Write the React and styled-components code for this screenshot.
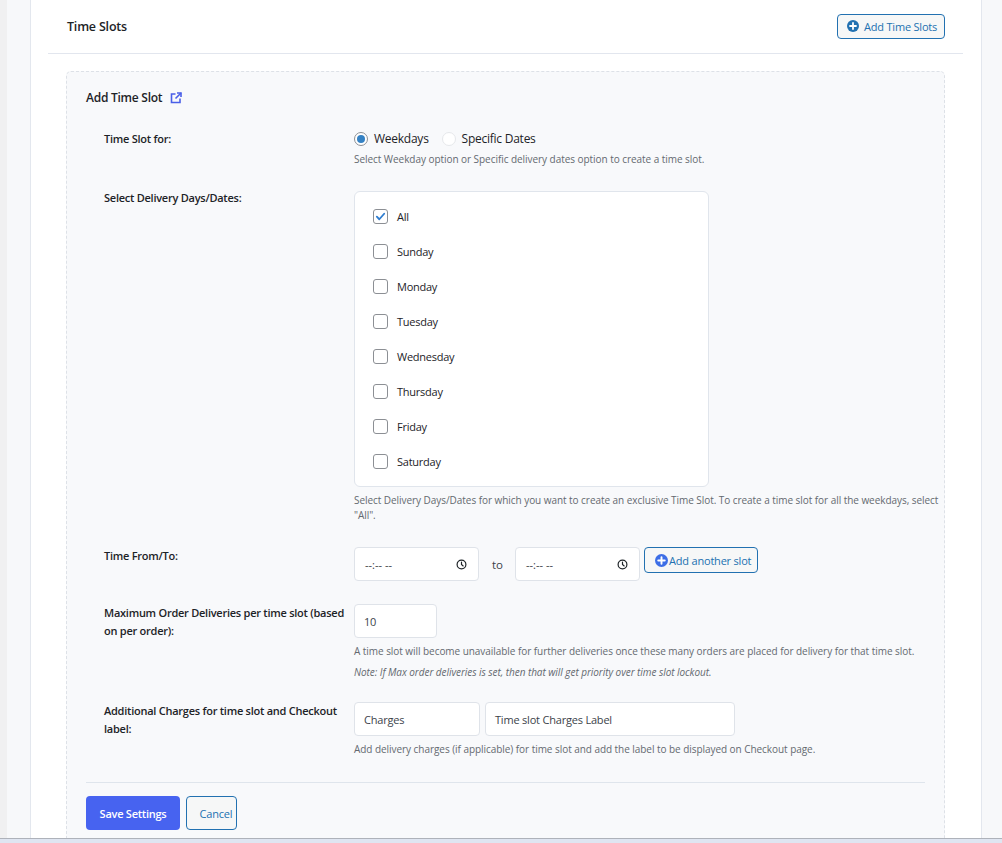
import React from "react";
import styled, { createGlobalStyle } from "styled-components";

const Global = createGlobalStyle`
  html, body { margin: 0; padding: 0; height: 100%; }
  body {
    font-family: "Open Sans", "Noto Sans", "Liberation Sans", sans-serif;
    color: #1d2327;
    background: #f0f0f1;
  }
  #root { height: 100%; }
  * { box-sizing: border-box; }
`;

const Page = styled.div`
  height: 100vh;
  display: flex;
  flex-direction: column;
  overflow: hidden;
`;

const Viewport = styled.div`
  flex: 1;
  min-height: 0;
  display: flex;
  padding-left: 7px;
  overflow: hidden;
`;

const Canvas = styled.div`
  flex: 1;
  display: flex;
  background: #f7f8fa;
  padding: 0 20px 0 23px;
`;

const Card = styled.main`
  width: 952px;
  background: #fff;
  border-left: 1px solid #e3e7ee;
  border-right: 1px solid #e3e7ee;
  padding: 0 18px 0 17px;
  display: flex;
  flex-direction: column;
`;

const Header = styled.header`
  height: 54px;
  flex-shrink: 0;
  display: flex;
  align-items: center;
  justify-content: space-between;
  padding: 0 18px 1px 19px;
  border-bottom: 1px solid #e2e6ee;
`;

const Title = styled.h2`
  margin: 0;
  font-size: 12.5px;
  font-weight: 600;
  color: #1d2327;
  letter-spacing: -0.2px;
`;

const OutlineButton = styled.button`
  display: inline-flex;
  align-items: center;
  gap: ${(p) => p.$gap || 5}px;
  height: ${(p) => p.$h}px;
  width: ${(p) => p.$w}px;
  padding: 0 0 0 ${(p) => p.$pl || 9}px;
  justify-content: ${(p) => (p.$center ? "center" : "flex-start")};
  border: 1px solid #2271b1;
  border-radius: 4px;
  background: #f6f7f7;
  color: #2271b1;
  font-family: inherit;
  font-size: 11px;
  letter-spacing: -0.2px;
  cursor: pointer;
  margin-left: ${(p) => p.$ml || 0}px;
  align-self: ${(p) => (p.$top ? "flex-start" : "auto")};
  svg { flex-shrink: 0; }
`;

const Panel = styled.section`
  margin: 17px 18px 0 18px;
  flex: 1;
  background: #f8f9fb;
  border: 1px dashed #dde1e7;
  border-bottom: none;
  border-radius: 5px 5px 0 0;
  padding: 0 19px;
`;

const PanelHeading = styled.h3`
  margin: 17px 0 0;
  display: flex;
  align-items: center;
  gap: 8px;
  font-size: 12px;
  line-height: 18px;
  font-weight: 600;
  color: #1d2327;
  letter-spacing: -0.25px;
`;

const Rows = styled.div`
  padding-left: 18px;
`;

const Row = styled.div`
  display: grid;
  grid-template-columns: 250px 590px;
  align-items: start;
  margin-top: ${(p) => p.$mt}px;
`;

const Label = styled.div`
  font-size: 11px;
  line-height: 18px;
  font-weight: 600;
  color: #1d2327;
  padding-right: 6px;
  letter-spacing: -0.25px;
`;

const Field = styled.div`
  display: flex;
  flex-direction: column;
`;

const Inline = styled.div`
  display: flex;
  align-items: center;
  gap: ${(p) => p.$gap || 0}px;
`;

const Desc = styled.p`
  margin: ${(p) => p.$mt || 5}px 0 0;
  font-size: 10px;
  line-height: ${(p) => p.$lh || 16}px;
  color: #646970;
  font-style: ${(p) => (p.$italic ? "italic" : "normal")};
  letter-spacing: -0.05px;
`;

const RadioOption = styled.label`
  display: inline-flex;
  align-items: center;
  gap: 6px;
  margin-right: 13px;
  font-size: 12px;
  line-height: 18px;
  color: #1d2327;
  letter-spacing: -0.25px;
`;

const RadioDot = styled.span`
  width: 14px;
  height: 14px;
  border-radius: 50%;
  border: 1px solid ${(p) => (p.$on ? "#8c8f94" : "#e6e8eb")};
  background: #fff;
  display: inline-flex;
  align-items: center;
  justify-content: center;
  &::after {
    content: "";
    width: 8px;
    height: 8px;
    border-radius: 50%;
    background: ${(p) => (p.$on ? "#3582c4" : "transparent")};
  }
`;

const DaysBox = styled.div`
  width: 355px;
  background: #fff;
  border: 1px solid #e0e5ec;
  border-radius: 6px;
  padding: 7px 18px;
  margin-top: 2px;
`;

const DayItem = styled.label`
  height: 35px;
  display: flex;
  align-items: center;
  gap: 9px;
  font-size: 11px;
  color: #1d2327;
  letter-spacing: -0.25px;
`;

const CheckBox = styled.span`
  width: 15px;
  height: 15px;
  border: 1px solid #8c8f94;
  border-radius: 3px;
  background: #fff;
  display: inline-flex;
  align-items: center;
  justify-content: center;
`;

const TimeInput = styled.div`
  width: 125px;
  height: 34px;
  background: #fff;
  border: 1px solid #dfe3e9;
  border-radius: 4px;
  display: flex;
  align-items: center;
  justify-content: space-between;
  padding: 0 11px 0 10px;
  font-size: 11px;
  color: #3c434a;
`;

const ToText = styled.span`
  font-size: 11.5px;
  color: #3c434a;
  margin: 0 12px 0 13px;
`;

const TextBox = styled.div`
  width: ${(p) => p.$w}px;
  height: 34px;
  background: #fff;
  border: 1px solid #dfe3e9;
  border-radius: 4px;
  display: flex;
  align-items: center;
  padding: 0 9px;
  font-size: 11px;
  color: #3c434a;
  letter-spacing: -0.2px;
`;

const Divider = styled.hr`
  margin: 25px 0 0;
  border: none;
  border-top: 1px solid #dfe5ec;
`;

const Actions = styled.div`
  display: flex;
  gap: 6px;
  margin-top: 13px;
`;

const PrimaryButton = styled.button`
  width: 94px;
  height: 34px;
  border: none;
  border-radius: 4px;
  background: #4763f0;
  color: #fff;
  font-family: inherit;
  font-size: 11px;
  font-weight: 600;
  letter-spacing: -0.25px;
  cursor: pointer;
`;

const BottomStrip = styled.div`
  height: 5px;
  flex-shrink: 0;
  background: #dfe5f1;
  border-top: 1px solid #aeb2ba;
`;

const PlusCircle = ({ color, size = 12 }) => (
  <svg width={size} height={size} viewBox="0 0 12 12">
    <circle cx="6" cy="6" r="6" fill={color} />
    <path d="M6 3v6M3 6h6" stroke="#fff" strokeWidth="1.8" strokeLinecap="round" />
  </svg>
);

const ExternalIcon = () => (
  <svg width="12" height="12" viewBox="0 0 12 12" fill="none" stroke="#4a5fe8" strokeWidth="1.6">
    <path d="M5.5 2H1.5v8.5H10V6.5" />
    <path d="M7 1h4v4" />
    <path d="M11 1L5.5 6.5" />
  </svg>
);

const ClockIcon = () => (
  <svg width="11" height="11" viewBox="0 0 12 12" fill="none" stroke="#1d2327" strokeWidth="1.3">
    <circle cx="6" cy="6" r="4.8" />
    <path d="M6 3.3V6l1.8 1.6" strokeLinecap="round" />
  </svg>
);

const CheckMark = () => (
  <svg width="11" height="11" viewBox="0 0 12 12" fill="none" stroke="#2f7dd0" strokeWidth="2">
    <path d="M2 6.2l2.7 2.8L10 3" strokeLinecap="round" strokeLinejoin="round" />
  </svg>
);

const days = ["All", "Sunday", "Monday", "Tuesday", "Wednesday", "Thursday", "Friday", "Saturday"];

export default function App() {
  return (
    <Page>
      <Global />
      <Viewport>
        <Canvas>
          <Card>
            <Header>
              <Title>Time Slots</Title>
              <OutlineButton $w={108} $h={25} $pl={9}>
                <PlusCircle color="#2271b1" size={12} />
                Add Time Slots
              </OutlineButton>
            </Header>
            <Panel>
              <PanelHeading>
                Add Time Slot
                <ExternalIcon />
              </PanelHeading>
              <Rows>
                <Row $mt={23}>
                  <Label>Time Slot for:</Label>
                  <Field>
                    <Inline>
                      <RadioOption>
                        <RadioDot $on />
                        Weekdays
                      </RadioOption>
                      <RadioOption>
                        <RadioDot />
                        Specific Dates
                      </RadioOption>
                    </Inline>
                    <Desc $mt={3}>
                      Select Weekday option or Specific delivery dates option to create a time slot.
                    </Desc>
                  </Field>
                </Row>

                <Row $mt={22}>
                  <Label>Select Delivery Days/Dates:</Label>
                  <Field>
                    <DaysBox>
                      {days.map((d, i) => (
                        <DayItem key={d}>
                          <CheckBox>{i === 0 && <CheckMark />}</CheckBox>
                          {d}
                        </DayItem>
                      ))}
                    </DaysBox>
                    <Desc $mt={6} $lh={15}>
                      Select Delivery Days/Dates for which you want to create an exclusive Time Slot. To create a time slot for all the weekdays, select "All".
                    </Desc>
                  </Field>
                </Row>

                <Row $mt={24}>
                  <Label>Time From/To:</Label>
                  <Field>
                    <Inline>
                      <TimeInput>
                        <span>--:-- --</span>
                        <ClockIcon />
                      </TimeInput>
                      <ToText>to</ToText>
                      <TimeInput>
                        <span>--:-- --</span>
                        <ClockIcon />
                      </TimeInput>
                      <OutlineButton $w={114} $h={26} $pl={10} $gap={1} $ml={4} $top>
                        <PlusCircle color="#3d6ee6" size={13} />
                        Add another slot
                      </OutlineButton>
                    </Inline>
                  </Field>
                </Row>

                <Row $mt={23}>
                  <Label>Maximum Order Deliveries per time slot (based on per order):</Label>
                  <Field>
                    <TextBox $w={83}>10</TextBox>
                    <Desc $mt={5}>
                      A time slot will become unavailable for further deliveries once these many orders are placed for delivery for that time slot.
                    </Desc>
                    <Desc $mt={5} $italic>
                      Note: If Max order deliveries is set, then that will get priority over time slot lockout.
                    </Desc>
                  </Field>
                </Row>

                <Row $mt={22}>
                  <Label>Additional Charges for time slot and Checkout label:</Label>
                  <Field>
                    <Inline $gap={5}>
                      <TextBox $w={126}>Charges</TextBox>
                      <TextBox $w={250}>Time slot Charges Label</TextBox>
                    </Inline>
                    <Desc $mt={5}>
                      Add delivery charges (if applicable) for time slot and add the label to be displayed on Checkout page.
                    </Desc>
                  </Field>
                </Row>
              </Rows>
              <Divider />
              <Actions>
                <PrimaryButton>Save Settings</PrimaryButton>
                <OutlineButton $w={51} $h={34} $pl={0} $center>
                  Cancel
                </OutlineButton>
              </Actions>
            </Panel>
          </Card>
        </Canvas>
      </Viewport>
      <BottomStrip />
    </Page>
  );
}
